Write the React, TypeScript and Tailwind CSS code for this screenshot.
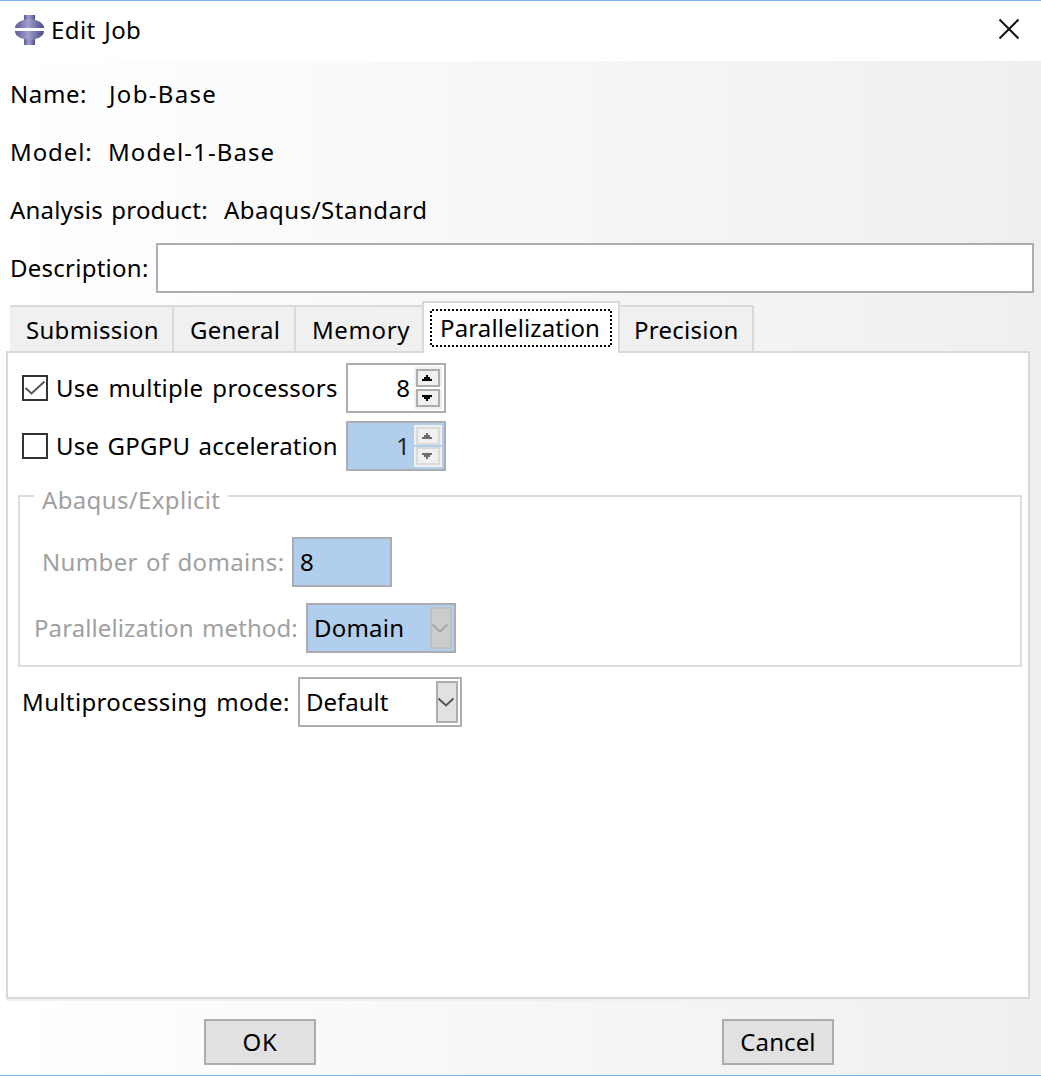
import clsx from "clsx";

const tabs = [
  { name: "Submission", box: "w-[164px] pl-4", text: "tracking-[0.3px]" },
  { name: "General", box: "w-[122px] pl-4", text: "tracking-[0.25px]" },
  { name: "Memory", box: "w-[126px] pl-4", text: "tracking-[0.6px]" },
  { name: "Parallelization", box: "w-[198px]", text: "tracking-[0.13px]" },
  { name: "Precision", box: "w-[134px] pl-[14px]", text: "tracking-[0.25px]" },
];

function Logo() {
  return (
    <svg width="30" height="30" viewBox="0 0 30 30" className="shrink-0">
      <defs>
        <linearGradient id="logo" x1="0" x2="1" y1="0" y2="0">
          <stop offset="0" stopColor="#5c5a98" />
          <stop offset="0.45" stopColor="#a09fcb" />
          <stop offset="1" stopColor="#4b498c" />
        </linearGradient>
      </defs>
      <rect x="9" y="0" width="11" height="30" fill="url(#logo)" />
      <path d="M0 13 A14.500 9 0 0 1 29 13 Z" fill="url(#logo)" />
      <path d="M0 16 A14.500 9 0 0 0 29 16 Z" fill="url(#logo)" />
      <rect x="0" y="13" width="30" height="3" fill="#fff" />
    </svg>
  );
}

function Checkbox({ checked }: { checked?: boolean }) {
  return (
    <div className="flex h-[26px] w-[26px] shrink-0 items-center justify-center border-2 border-[#333] bg-white">
      {checked && (
        <svg width="22" height="22" viewBox="0 0 22 22" fill="none" stroke="#555" strokeWidth="2">
          <path d="M1.500 11 L7.500 16.500 L20.500 4.500" />
        </svg>
      )}
    </div>
  );
}

function SpinButton({ down, disabled }: { down?: boolean; disabled?: boolean }) {
  return (
    <div className={clsx("h-5 w-7 bg-[#f0f0f0] px-0.5", down ? "pb-0.5" : "pt-0.5")}>
      <div
        className={clsx(
          "h-[18px] w-[24px] border-2 bg-[#f0f0f0]",
          disabled ? "border-[#dadada]" : "border-[#adadad]"
        )}
      >
        <svg
          width="20"
          height="14"
          shapeRendering="crispEdges"
          fill={disabled ? "#6d6d6d" : "#000"}
        >
          {down ? (
            <path d="M4 4h10v2h-2v2h-2v2h-2v-2h-2v-2h-2z" />
          ) : (
            <path d="M8 4h2v2h2v2h2v2h-10v-2h2v-2h2z" />
          )}
        </svg>
      </div>
    </div>
  );
}

function Spinner({ value, disabled }: { value: number; disabled?: boolean }) {
  return (
    <div
      className={clsx(
        "flex h-[50px] w-[100px] items-center justify-end gap-1 border-2 border-[#abadb3] pr-0.5",
        disabled ? "bg-[#b1ceec]" : "bg-white"
      )}
    >
      <span className={disabled ? "text-[#222]" : ""}>{value}</span>
      <div className="flex flex-col gap-0.5">
        <SpinButton disabled={disabled} />
        <SpinButton down disabled={disabled} />
      </div>
    </div>
  );
}

type SelectProps = { value: string; width: string; text: string; disabled?: boolean };

function Select({ value, width, text, disabled }: SelectProps) {
  return (
    <div
      className={clsx(
        "flex h-[50px] items-center justify-between border-2 border-[#abadb3] pr-0.5 pl-1.5",
        width,
        disabled ? "bg-[#b1ceec]" : "bg-white"
      )}
    >
      <span className={text}>{value}</span>
      <div
        className={clsx(
          "flex h-[42px] w-[22px] shrink-0 items-center justify-center border-2",
          disabled ? "border-[#bfbfbf] bg-[#ccc]" : "border-[#adadad] bg-[#e1e1e1]"
        )}
      >
        <svg
          width="18"
          height="12"
          fill="none"
          stroke={disabled ? "#a6a6a6" : "#555"}
          strokeWidth="2"
          className="shrink-0"
        >
          <path d="M0.500 2.500 L8 9.500 L15.500 2.500" />
        </svg>
      </div>
    </div>
  );
}

export default function App() {
  return (
    <div className="flex h-[1076px] w-[1041px] flex-col overflow-hidden whitespace-nowrap border-y border-[#7eb4ea] bg-white font-['Noto_Sans','Noto_Sans_CJK_SC',sans-serif] text-[24px] leading-[32px] text-black">
      <header className="flex h-[60px] shrink-0 items-center justify-between pr-[21px] pb-[2px] pl-[15px]">
        <div className="flex items-center gap-[6px]">
          <Logo />
          <span className="tracking-[0.4px] [word-spacing:2px]">Edit Job</span>
        </div>
        <svg width="22" height="22" stroke="#111" strokeWidth="2" className="mb-0.5">
          <path d="M1.500 1.500 L20.500 20.500 M20.500 1.500 L1.500 20.500" />
        </svg>
      </header>

      <main className="flex flex-1 flex-col bg-linear-to-r from-white to-[#efefef] pt-1">
        <div className="flex h-[58px] items-center pl-[10px]">
          <span className="w-[99px] tracking-[0.6px]">Name:</span>
          <span className="tracking-[1.3px]">Job-Base</span>
        </div>
        <div className="flex h-[58px] items-center pl-[10px]">
          <span className="w-[98px] tracking-[0.9px]">Model:</span>
          <span className="tracking-[1.1px]">Model-1-Base</span>
        </div>
        <div className="flex h-[58px] items-center pl-[10px]">
          <span className="w-[214px] tracking-[0.2px] [word-spacing:2px]">Analysis product:</span>
          <span className="tracking-[0.5px]">Abaqus/Standard</span>
        </div>
        <div className="flex h-[58px] items-center pl-[10px]">
          <span className="w-[146px] tracking-[0.25px]">Description:</span>
          <div className="h-[50px] w-[878px] border-2 border-[#abadb3] bg-white" />
        </div>

        <div className="flex h-[54px] items-end pl-[10px]">
          {tabs.map((tab) =>
            tab.name === "Parallelization" ? (
              <div
                key={tab.name}
                className={clsx(
                  "relative z-10 -mb-0.5 h-[52px] border-2 border-b-0 border-[#d9d9d9] bg-white px-1.5 pt-1.5",
                  tab.box
                )}
              >
                <div className="h-[38px] bg-[repeating-conic-gradient(#000_0_25%,#fff_0_50%)] bg-[length:4px_4px] p-0.5">
                  <div className="flex h-[34px] items-center bg-white pl-2">
                    <span className={tab.text}>{tab.name}</span>
                  </div>
                </div>
              </div>
            ) : (
              <div
                key={tab.name}
                className={clsx(
                  "flex h-[46px] items-center border-t-2 border-[#d9d9d9] bg-[#f0f0f0] pt-0.5",
                  tab.name !== "Memory" && "border-r-2",
                  tab.box
                )}
              >
                <span className={tab.text}>{tab.name}</span>
              </div>
            )
          )}
        </div>

        <section className="ml-1.5 h-[648px] w-[1024px] border-2 border-[#d9d9d9] bg-white pt-[10px] shadow-[0_2px_0_#f0f0f0]">
          <div className="flex h-[50px] items-center pl-[14px]">
            <Checkbox checked />
            <span className="w-[298px] pl-2 tracking-[0.27px] [word-spacing:2.5px]">
              Use multiple processors
            </span>
            <Spinner value={8} />
          </div>
          <div className="mt-2 flex h-[50px] items-center pl-[14px]">
            <Checkbox />
            <span className="w-[298px] pl-2 tracking-[0.2px] [word-spacing:2px]">
              Use GPGPU acceleration
            </span>
            <Spinner value={1} disabled />
          </div>

          <div className="relative mt-6 ml-[10px] h-[172px] w-[1004px] border-2 border-[#dcdcdc] pt-10 text-[#a0a0a0]">
            <span className="absolute -top-[13px] left-3.5 w-[194px] bg-white pl-2 tracking-[0.35px]">
              Abaqus/Explicit
            </span>
            <div className="flex h-[50px] items-center pl-[22px]">
              <span className="w-[250px] tracking-[0.35px] [word-spacing:1.5px]">
                Number of domains:
              </span>
              <div className="flex h-[50px] w-[100px] items-center border-2 border-[#abadb3] bg-[#b1ceec] pl-1.5 text-black">
                8
              </div>
            </div>
            <div className="mt-4 flex h-[50px] items-center pl-[14px]">
              <span className="w-[272px] tracking-[0.1px] [word-spacing:2px]">
                Parallelization method:
              </span>
              <div className="text-black">
                <Select value="Domain" width="w-[150px]" text="tracking-[0.2px]" disabled />
              </div>
            </div>
          </div>

          <div className="mt-[10px] flex h-[50px] items-center pl-[14px]">
            <span className="w-[276px] tracking-[0.36px] [word-spacing:2px]">
              Multiprocessing mode:
            </span>
            <Select value="Default" width="w-[164px]" text="" />
          </div>
        </section>

        <footer className="mt-5 flex gap-[406px] pl-[204px]">
          <button className="h-[46px] w-[112px] border-2 border-[#adadad] bg-[#e1e1e1] tracking-[0.8px]">
            OK
          </button>
          <button className="h-[46px] w-[112px] border-2 border-[#adadad] bg-[#e1e1e1] tracking-[0.1px]">
            Cancel
          </button>
        </footer>
      </main>
    </div>
  );
}
